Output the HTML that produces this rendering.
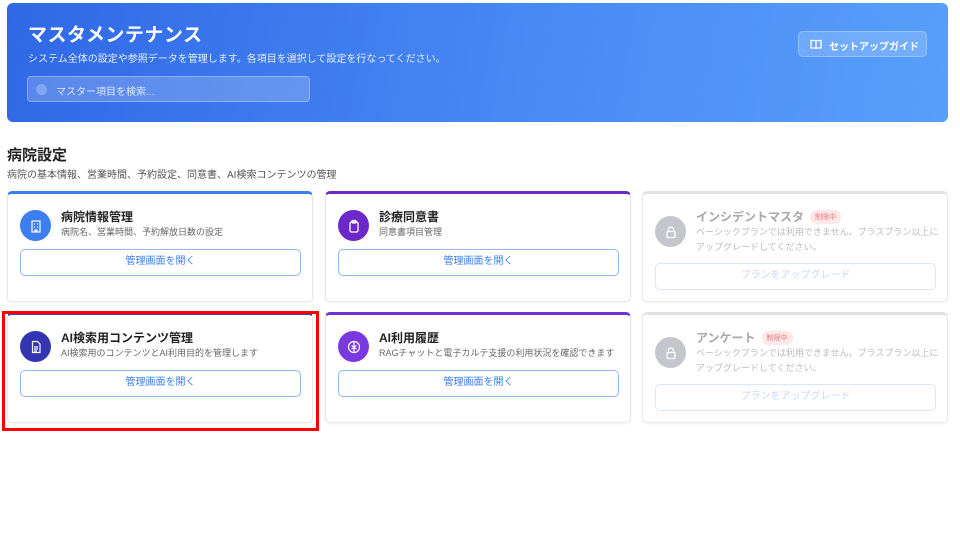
<!DOCTYPE html>
<html><head><meta charset="utf-8"><style>
*{box-sizing:border-box;margin:0;padding:0}
body{width:960px;height:540px;background:#fff;font-family:"Liberation Sans","Noto Sans CJK JP",sans-serif;position:relative;overflow:hidden}
.hdr{position:absolute;left:7px;top:3px;width:941px;height:119px;border-radius:6px;background:linear-gradient(100deg,#2f68e6,#4a8cf5 60%,#589ffb)}
.hdr h1{position:absolute;left:21px;top:17px;color:#fff;font-size:19px;font-weight:bold;letter-spacing:0.5px}
.hdr p{position:absolute;left:21px;top:47px;color:#e6eeff;font-size:10px}
.search{position:absolute;left:20px;top:73px;width:283px;height:26px;border-radius:4px;background:rgba(255,255,255,.2);border:1px solid rgba(255,255,255,.3);color:#dfe8ff;font-size:10px;padding:6px 0 0 28px}
.search:before{content:"";position:absolute;left:8px;top:7px;width:11px;height:11px;border-radius:50%;background:rgba(255,255,255,.25)}
.guide{position:absolute;left:791px;top:28px;width:129px;height:26px;border-radius:5px;background:rgba(255,255,255,.18);border:1px solid rgba(255,255,255,.25);color:#fff;font-size:10px;font-weight:bold;padding:6px 0 0 30px}
.guide svg{position:absolute;left:11px;top:7px}
h2{position:absolute;left:7px;top:144px;font-size:15px;font-weight:bold;color:#222}
.sub{position:absolute;left:7px;top:166px;font-size:10px;color:#555}
.card{position:absolute;width:306px;height:111px;border:1px solid #e8e8ec;border-top:3px solid #3b7ef0;border-radius:5px;background:#fff;box-shadow:0 1px 2px rgba(0,0,0,.05)}
.ic{position:absolute;left:12px;top:16px;width:31px;height:31px;border-radius:50%;display:flex;align-items:center;justify-content:center}
.t{position:absolute;left:53px;top:14px;font-size:12px;font-weight:bold;color:#222}
.d{position:absolute;left:53px;top:31px;font-size:9px;color:#666;line-height:15px}
.btn{position:absolute;left:12px;top:55px;width:281px;height:27px;border:1.5px solid #93b6f7;border-radius:5px;color:#3b7ef0;font-size:10px;text-align:center;line-height:24px}
.dis{border-top-color:#e3e3e6}
.dis .ic{background:#c4c6cb;top:22px}
.dis .t{color:#a8a8ad}
.dis .d{color:#bbb}
.dis .btn{top:69px;border-color:#dbe6fc;color:#c6d6f8}
.tag{display:inline-block;margin-left:6px;background:#fde7e7;color:#e08080;font-size:7px;font-weight:normal;padding:2px 5px;border-radius:7px;vertical-align:2px}
.red{position:absolute;left:2px;top:311px;width:317px;height:120px;border:3px solid #f00}
</style></head><body>
<div class="hdr"><h1>マスタメンテナンス</h1><p>システム全体の設定や参照データを管理します。各項目を選択して設定を行なってください。</p>
<div class="search">マスター項目を検索...</div>
<div class="guide"><svg width="12" height="11" viewBox="0 0 12 11" fill="none" stroke="#fff" stroke-width="1.3"><path d="M1 1.5h3.5c.8 0 1.5.7 1.5 1.5v7c0-.7-.6-1-1.2-1H1zM11 1.5H7.5C6.7 1.5 6 2.2 6 3v7c0-.7.6-1 1.2-1H11z"/></svg>セットアップガイド</div></div>
<h2>病院設定</h2>
<div class="sub">病院の基本情報、営業時間、予約設定、同意書、AI検索コンテンツの管理</div>

<div class="card" style="left:7px;top:191px"><div class="ic" style="background:#3b7ef0"><svg width="14" height="14" viewBox="0 0 14 14" fill="none" stroke="#fff" stroke-width="1.2"><rect x="3" y="2" width="8" height="11"/><path d="M5 5h1M8 5h1M5 8h1M8 8h1M6 13v-2h2v2"/></svg></div><div class="t">病院情報管理</div><div class="d">病院名、営業時間、予約解放日数の設定</div><div class="btn">管理画面を開く</div></div>
<div class="card" style="left:325px;top:191px;border-top-color:#6d28c9"><div class="ic" style="background:#6d28c9"><svg width="14" height="14" viewBox="0 0 14 14" fill="none" stroke="#fff" stroke-width="1.3"><rect x="3" y="3" width="8" height="10" rx="1.5"/><rect x="5" y="1.5" width="4" height="2.5" rx=".5"/></svg></div><div class="t">診療同意書</div><div class="d">同意書項目管理</div><div class="btn">管理画面を開く</div></div>
<div class="card dis" style="left:642px;top:191px"><div class="ic"><svg width="14" height="14" viewBox="0 0 14 14" fill="none" stroke="#fff" stroke-width="1.3"><rect x="3" y="6.5" width="8" height="6" rx="1"/><path d="M4.5 6.5V4.5a2.5 2.5 0 015 0v2"/></svg></div><div class="t">インシデントマスタ<span class="tag">制限中</span></div><div class="d">ベーシックプランでは利用できません。プラスプラン以上に<br>アップグレードしてください。</div><div class="btn">プランをアップグレード</div></div>

<div class="card" style="left:7px;top:312px;border-top-color:#3b3fc0"><div class="ic" style="background:#3336b0"><svg width="14" height="14" viewBox="0 0 14 14" fill="none" stroke="#fff" stroke-width="1.2"><path d="M3.5 1.5h5l2.5 2.5v8.5h-7.5z"/><path d="M5 7h4M5 9h4M5 11h3"/></svg></div><div class="t">AI検索用コンテンツ管理</div><div class="d">AI検索用のコンテンツとAI利用目的を管理します</div><div class="btn">管理画面を開く</div></div>
<div class="card" style="left:325px;top:312px;border-top-color:#7131d8"><div class="ic" style="background:#7a38e0"><svg width="14" height="14" viewBox="0 0 14 14" fill="none" stroke="#fff" stroke-width="1.2"><circle cx="7" cy="7" r="5.5"/><path d="M7 2v10M4.5 5.5l2.5 1.5 2.5-1.5M4.5 9l2.5-1.5L9.5 9"/></svg></div><div class="t">AI利用履歴</div><div class="d">RAGチャットと電子カルテ支援の利用状況を確認できます</div><div class="btn">管理画面を開く</div></div>
<div class="card dis" style="left:642px;top:312px"><div class="ic"><svg width="14" height="14" viewBox="0 0 14 14" fill="none" stroke="#fff" stroke-width="1.3"><rect x="3" y="6.5" width="8" height="6" rx="1"/><path d="M4.5 6.5V4.5a2.5 2.5 0 015 0v2"/></svg></div><div class="t">アンケート<span class="tag">制限中</span></div><div class="d">ベーシックプランでは利用できません。プラスプラン以上に<br>アップグレードしてください。</div><div class="btn">プランをアップグレード</div></div>
<div class="red"></div>
</body></html>
